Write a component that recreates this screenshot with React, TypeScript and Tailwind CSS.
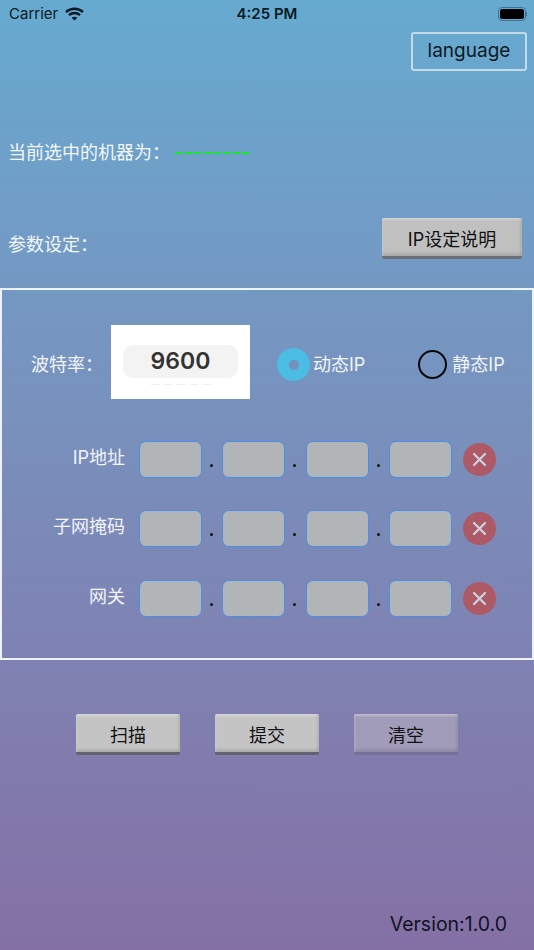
const sans = "font-['Inter','Noto_Sans_CJK_SC',sans-serif]";

function Wifi() {
  return (
    <svg width="19" height="14" viewBox="0 0 19 14" fill="none" stroke="#0b1a24" strokeWidth="2.4">
      <path d="M1 5 C 5.8 0.6, 13.2 0.6, 18 5" />
      <path d="M4 8.2 C 7.2 5.3, 11.8 5.3, 15 8.2" />
      <path d="M9.5 13.6 L6.6 10.8 C 8.3 9.4, 10.7 9.4, 12.4 10.8 Z" fill="#0b1a24" stroke="none" />
    </svg>
  );
}

function Raised({ label, className }: { label: string; className: string }) {
  return (
    <div
      className={`flex items-center justify-center rounded-[2px] pt-[4px] text-[18px] text-[#111] border-b-[3px] shadow-[inset_0_2px_2px_rgba(255,255,255,0.3),inset_2px_0_2px_rgba(255,255,255,0.1),inset_-2px_0_2px_rgba(0,0,0,0.08),inset_0_-3px_3px_rgba(0,0,0,0.1)] ${className}`}
    >
      {label}
    </div>
  );
}

function Field() {
  return <div className="w-[63px] h-[37px] rounded-[7px] bg-[#b2b5b7] border border-[#4a8fe6]" />;
}

function Dot({ className }: { className: string }) {
  return (
    <div className={`h-[37px] pl-[8px] flex items-end pb-[11px] ${className}`}>
      <div className="w-[3px] h-[3px] rounded-full bg-[#111]" />
    </div>
  );
}

function IpRow({ label, className }: { label: string; className?: string }) {
  return (
    <div className={`flex items-center ${className ?? ""}`}>
      <div className="w-[123px] text-right text-[18px] text-[#f2f4f8] leading-[24px] pb-[3px]">{label}</div>
      <div className="ml-[14px] flex">
        <Field />
        <Dot className="w-[20px]" />
        <Field />
        <Dot className="w-[21px]" />
        <Field />
        <Dot className="w-[20px]" />
        <Field />
      </div>
      <div className="ml-[11px] w-[33px] h-[33px] rounded-full bg-[#ad5a66] flex items-center justify-center">
        <svg width="15" height="15" viewBox="0 0 15 15" stroke="#ccd3e4" strokeWidth="2.2" strokeLinecap="round">
          <path d="M2 2 L13 13 M13 2 L2 13" />
        </svg>
      </div>
    </div>
  );
}

export default function App() {
  return (
    <div className={`w-[534px] h-[950px] overflow-hidden flex flex-col bg-gradient-to-b from-[#66aad0] to-[#8470a5] ${sans}`}>
      {/* status bar */}
      <div className="h-[28px] shrink-0 relative flex items-center justify-between pl-[9px] pr-[7px] text-[#0b1a24]">
        <div className="flex items-center gap-[7px] text-[15px]">
          <span>Carrier</span>
          <Wifi />
        </div>
        <div className="absolute left-0 right-0 text-center text-[15px] font-semibold">4:25 PM</div>
        <div className="flex items-center">
          <div className="w-[28px] h-[14px] rounded-[4px] border border-[#3e7396] p-[1px]">
            <div className="w-full h-full rounded-[2.5px] bg-black" />
          </div>
          <div className="w-[1.5px] h-[4px] bg-[#3e7396]" />
        </div>
      </div>

      {/* language */}
      <div className="flex justify-end pr-[7px] mt-[4px]">
        <div className="w-[116px] h-[39px] rounded-[3px] border-2 border-[#c6d9e6] flex items-center justify-center text-[19px] text-[#0d1a26]">
          language
        </div>
      </div>

      {/* selected machine */}
      <div className="flex items-center mt-[69px] h-[24px] pl-[8px] text-[18px] text-[#f4f7fa]">
        <span>当前选中的机器为：</span>
        <span className="ml-[5px] w-[76px] h-[2px] mt-[1px] bg-[repeating-linear-gradient(90deg,#14ea20_0,#14ea20_7px,transparent_7px,transparent_9.6px)]" />
      </div>

      {/* params */}
      <div className="flex items-center justify-between mt-[54px] pl-[8px] pr-[12px] h-[41px]">
        <span className="text-[18px] text-[#f4f7fa] mt-[11px]">参数设定：</span>
        <Raised
          label="IP设定说明"
          className="w-[140px] h-[41px] bg-[#c0c0c0] border-b-[#6c6f78]"
        />
      </div>

      {/* panel */}
      <div className="mt-[29px] h-[372px] border-2 border-[#eef2f8] flex flex-col">
        <div className="flex items-center mt-[35px] h-[74px]">
          <div className="w-[109px] pl-[29px] pt-[5px] text-[18px] text-[#f2f4f8]">波特率：</div>
          <div className="w-[139px] h-[74px] bg-white flex flex-col items-center pt-[20px]">
            <div className="w-[115px] h-[33px] rounded-[10px] bg-[#f3f3f3] flex items-center justify-center text-[23px] font-semibold text-[#333]">
              9600
            </div>
            <div className="flex gap-[5px] mt-[6px]">
              <div className="w-[8px] h-[1px] bg-[#eeeeee]" />
              <div className="w-[8px] h-[1px] bg-[#eeeeee]" />
              <div className="w-[8px] h-[1px] bg-[#eeeeee]" />
              <div className="w-[8px] h-[1px] bg-[#eeeeee]" />
              <div className="w-[8px] h-[1px] bg-[#eeeeee]" />
            </div>
          </div>
          <div className="ml-[27px] mt-[5px] w-[33px] h-[33px] rounded-full bg-[#4bbce3] flex items-center justify-center">
            <div className="w-[10px] h-[10px] rounded-full bg-[#7590bb]" />
          </div>
          <span className="ml-[3px] pt-[5px] text-[18px] text-[#f2f4f8]">动态IP</span>
          <div className="ml-[53px] mt-[5px] w-[29px] h-[29px] rounded-full border-2 border-[#0a0a0a]" />
          <span className="ml-[5px] pt-[5px] text-[18px] text-[#f2f4f8]">静态IP</span>
        </div>
        <IpRow label="IP地址" className="mt-[42px]" />
        <IpRow label="子网掩码" className="mt-[32px]" />
        <IpRow label="网关" className="mt-[33px]" />
      </div>

      {/* actions */}
      <div className="flex mt-[54px] pl-[76px] gap-[35px]">
        <Raised label="扫描" className="w-[104px] h-[41px] bg-[#c4c4c4] border-b-[#63626f]" />
        <Raised label="提交" className="w-[104px] h-[41px] bg-[#c4c4c4] border-b-[#63626f]" />
        <Raised label="清空" className="w-[104px] h-[41px] bg-[#a29cbb] border-b-[#757097]" />
      </div>

      {/* version */}
      <div className="mt-auto pb-[11px] pr-[27px] text-right text-[19.5px] text-[#10131f]">Version:1.0.0</div>
    </div>
  );
}
